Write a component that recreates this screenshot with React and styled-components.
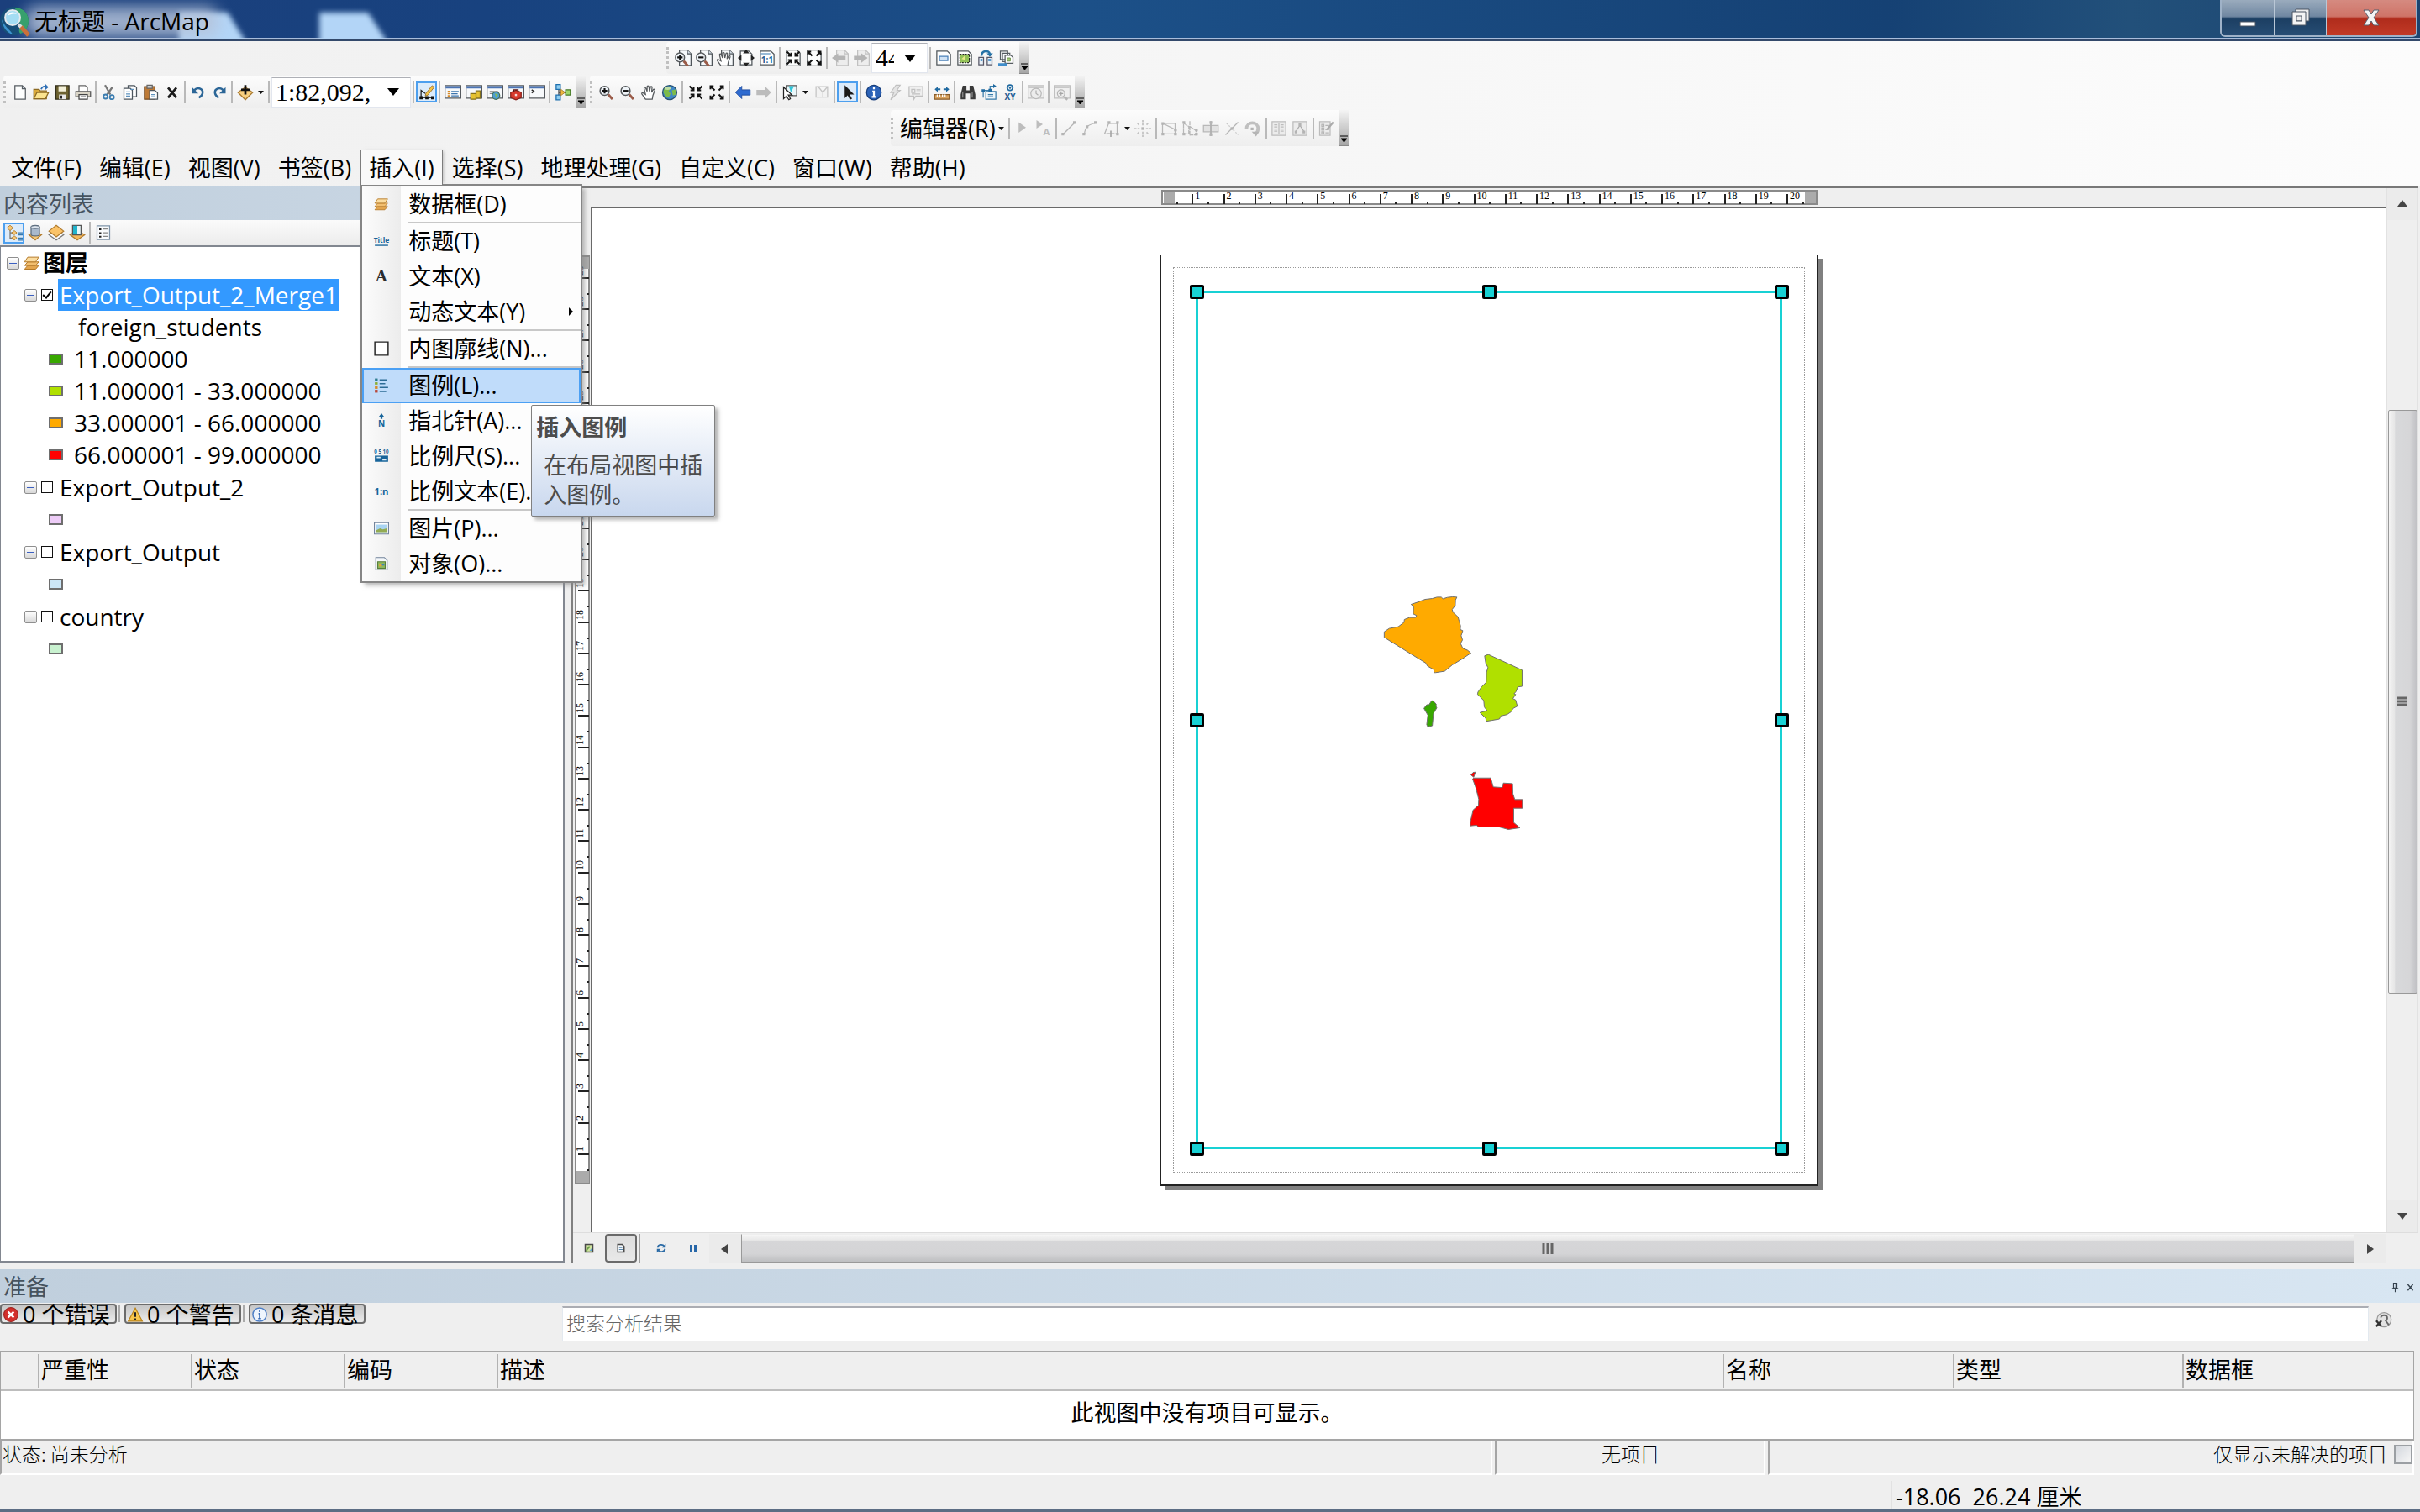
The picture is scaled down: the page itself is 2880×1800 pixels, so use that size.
import React, { useState } from "react";
import styled, { createGlobalStyle, css } from "styled-components";

const uiFont = `"Open Sans", "Noto Sans CJK SC", sans-serif`;

const GlobalStyle = createGlobalStyle`
  * {
    box-sizing: border-box;
  }
  body {
    margin: 0;
    background: #efefef;
    font-family: ${uiFont};
    font-size: 27px;
    line-height: 38px;
    color: #000;
  }
  button, input, select {
    font: inherit;
    color: inherit;
    margin: 0;
    padding: 0;
    border: 0;
    background: none;
  }
`;

/* ---------- window ---------- */

const Window = styled.div`
  display: flex;
  flex-direction: column;
  min-height: 100vh;
  overflow: hidden;
`;

const TitleBar = styled.header`
  position: relative;
  display: flex;
  align-items: flex-start;
  justify-content: space-between;
  height: 49px;
  padding-right: 3px;
  border-bottom: 3px solid #33496b;
  box-shadow: inset 0 -1px 0 #a9bddb;
  background: linear-gradient(90deg, #1b3f7c 0%, #18427f 20%, #1c5088 45%, #154174 78%, #22507a 88%, #1b4470 100%);
`;

const TitleShade = styled.svg`
  position: absolute;
  left: 0;
  top: 0;
  width: 520px;
  height: 46px;
`;

const WindowTitle = styled.h1`
  position: relative;
  display: flex;
  align-items: center;
  gap: 5px;
  height: 49px;
  margin: 0;
  font-size: 28px;
  font-weight: 400;
`;

const WindowButtons = styled.div`
  display: flex;
  height: 44px;
  border: 2px solid #9fb2c8;
  border-top: 0;
  border-radius: 0 0 6px 6px;
  overflow: hidden;
`;

const WindowButton = styled.button`
  display: flex;
  align-items: center;
  justify-content: center;
  width: ${(p) => (p.$close ? 107 : 62)}px;
  border-left: ${(p) => (p.$first ? 0 : 1)}px solid #b9c7d6;
  background: ${(p) =>
    p.$close
      ? "linear-gradient(#d58a80 0%, #cf7468 46%, #b02c1c 54%, #c23a26 100%)"
      : "linear-gradient(#9aabbd 0%, #7188a2 46%, #1c3f63 54%, #274d74 100%)"};
`;

/* ---------- toolbars ---------- */

const ToolbarArea = styled.div`
  display: flex;
  flex-direction: column;
  gap: 2px;
  padding-top: 1px;
  background: linear-gradient(90deg, #f0f0f0, #fcfcfc);
`;

const ToolbarRow = styled.div`
  display: flex;
  gap: 5px;
  height: ${(p) => p.$height}px;
  padding-left: ${(p) => p.$start}px;
`;

const Toolbar = styled.div`
  display: flex;
  align-items: center;
  border-radius: 4px;
  background: linear-gradient(#fcfcfc, #eeeeee);
`;

const Grip = styled.span`
  width: 7px;
  height: 26px;
  border-left: 3px dotted #c0c0c0;
`;

const ToolButton = styled.button`
  display: flex;
  align-items: center;
  justify-content: center;
  flex: none;
  width: 25px;
  height: 25px;
  ${(p) =>
    p.$on &&
    css`
      border: 2px solid #4d9fee;
      background: #dcebfa;
    `}
`;

const DropButton = styled.button`
  display: flex;
  align-items: center;
  justify-content: center;
  width: 13px;
  height: 25px;
`;

const Separator = styled.span`
  width: 2px;
  height: 26px;
  margin: 0 2px;
  background: #b9b9b9;
`;

const Overflow = styled.button`
  display: flex;
  align-items: flex-end;
  justify-content: center;
  align-self: stretch;
  width: 12px;
  margin-left: 3px;
  padding-bottom: 2px;
  border-bottom: 1px solid #8a8a8a;
  background: linear-gradient(#f4f4f4, #a6a6a6);
`;

const Combo = styled.label`
  display: flex;
  align-items: center;
  width: ${(p) => p.$width}px;
  height: 36px;
  padding: 0 4px;
  border: 1px solid #e2e6ee;
  border-top-color: #aeb0b6;
  background: #fff;
`;

const ComboSelect = styled.select`
  flex: 1;
  min-width: 0;
  appearance: none;
  overflow: hidden;
  text-overflow: clip;
  font-family: "Liberation Serif", serif;
  font-size: 30px;
  line-height: 32px;
`;

const ComboArrow = styled.svg`
  flex: none;
  width: 14px;
  height: 9px;
  margin: 0 9px 0 ${(p) => p.$gap}px;
`;

const EditorButton = styled.button`
  padding-left: 4px;
  white-space: nowrap;
`;

/* ---------- menu ---------- */

const MenuBar = styled.nav`
  display: flex;
  align-items: flex-start;
  gap: 1px;
  height: 46px;
  padding: 2px 0 0 3px;
`;

const MenuSlot = styled.div`
  position: relative;
`;

const MenuTitle = styled.button`
  position: relative;
  height: 42px;
  padding: 0 9px;
  line-height: 42px;
  white-space: nowrap;
  border: 1px solid transparent;
  border-bottom: 0;
  ${(p) =>
    p.$open &&
    css`
      z-index: 3;
      border-color: #7d7d7d;
      background: #f9f9f9;
      box-shadow: 3px 0 4px -2px #8888;
    `}
`;

const Dropdown = styled.div`
  position: absolute;
  z-index: 2;
  left: 0;
  top: 41px;
  width: 264px;
  padding-top: 1px;
  border: 2px solid #868686;
  box-shadow: 4px 4px 5px -1px #8889;
  background: linear-gradient(90deg, #fcfcfc 0, #ececec 46px, #fdfdfd 46px);
`;

const MenuEntry = styled.button`
  display: flex;
  align-items: center;
  width: 100%;
  height: 42px;
  padding-left: 14px;
  text-align: left;
  white-space: nowrap;
  ${(p) =>
    p.$active &&
    css`
      outline: 2px solid #4ba0f4;
      outline-offset: -2px;
      background: #c0dcfa;
    `}
`;

const EntryIcon = styled.span`
  display: flex;
  width: 41px;
`;

const EntryLabel = styled.span`
  flex: 1;
`;

const MenuRule = styled.hr`
  height: 2px;
  margin: 0 0 0 55px;
  border: 0;
  background: #c8c8c8;
`;

const Tooltip = styled.div`
  position: absolute;
  z-index: 4;
  left: 203px;
  top: 304px;
  width: 219px;
  padding: 8px 4px 8px 5px;
  border: 1px solid #808080;
  border-radius: 2px;
  box-shadow: 4px 4px 4px #7778;
  background: linear-gradient(#ffffff, #e4ebf6 50%, #c8d7ee);
  color: #4c4c4c;
  line-height: 35px;
`;

const TooltipTitle = styled.strong`
  display: block;
`;

const TooltipText = styled.p`
  margin: 10px 0 0 9px;
`;

/* ---------- workspace ---------- */

const Workspace = styled.main`
  display: flex;
  flex: 1;
  padding-right: 2px;
`;

const ContentsPane = styled.aside`
  display: flex;
  flex-direction: column;
  width: 672px;
  margin: 0 8px 1px 0;
`;

const PaneHeader = styled.div`
  display: flex;
  align-items: center;
  height: 40px;
  padding: 2px 4px 0;
  color: #46535f;
  background: linear-gradient(90deg, #c0cfdd, ${(p) => p.$end});
`;

const PaneTitle = styled.h2`
  flex: 1;
  margin: 0;
  font-size: 27px;
  font-weight: 400;
`;

const PaneTools = styled.div`
  display: flex;
  align-items: center;
  height: 30px;
  padding-left: 4px;
  background: linear-gradient(#fbfbfb, #ececec);
`;

const Tree = styled.div`
  flex: 1;
  border: 2px solid #828790;
  border-left-width: 1px;
  background: #fff;
`;

const LayerGroup = styled.div`
  margin-bottom: 1px;
  font-size: 28px;
`;

const TreeRow = styled.div`
  display: flex;
  align-items: center;
  height: 38px;
  padding-left: ${(p) => p.$indent}px;
`;

const Expander = styled.button`
  display: flex;
  align-items: center;
  justify-content: center;
  width: 15px;
  height: 15px;
  margin-right: 5px;
  border: 1px solid #8f8f8f;
  border-radius: 2px;
  background: linear-gradient(#fff, #d8d8d8);

  &::before {
    content: "";
    width: 9px;
    height: 1px;
    background: #3b5fc0;
  }
`;

const RootLabel = styled.strong`
  margin-left: 3px;
`;

const LayerCheck = styled.input`
  display: flex;
  align-items: center;
  justify-content: center;
  appearance: none;
  flex: none;
  width: 14px;
  height: 14px;
  margin-right: 6px;
  border: 1px solid #111;
  background: #fff;

  &:checked::before {
    content: "";
    width: 4px;
    height: 8px;
    margin-bottom: 2px;
    border: solid #000;
    border-width: 0 2px 2px 0;
    transform: rotate(40deg);
  }
`;

const LayerName = styled.label`
  padding: 0 2px;
  ${(p) =>
    p.$selected &&
    css`
      color: #fff;
      background: #3399ff;
    `}
`;

const Swatch = styled.span`
  width: 17px;
  height: 13px;
  margin-right: 13px;
  border: 2px solid #6e6e6e;
  background: ${(p) => p.$color};
`;

const MapView = styled.section`
  display: grid;
  flex: 1;
  grid-template-columns: 21px 1fr 38px;
  grid-template-rows: 22px 1fr 37px;
  border-top: 2px solid #787878;
  border-left: 2px solid #808080;
  background: #efefef;
`;

const RulerTop = styled.div`
  display: flex;
  grid-column: 2;
  align-items: center;
  justify-content: center;
  padding-left: 2px;
`;

const RulerSide = styled.div`
  display: flex;
  grid-column: 1;
  grid-row: 2;
  align-items: center;
  justify-content: center;
`;

const RulerText = styled.text`
  font-family: "Liberation Serif", serif;
  font-size: 12px;
`;

const Canvas = styled.div`
  display: flex;
  grid-column: 2;
  grid-row: 2;
  align-items: center;
  justify-content: center;
  border: solid #696969;
  border-width: 2px 0 0 2px;
  background: #fff;
`;

const Page = styled.div`
  width: 783px;
  height: 1109px;
  padding: 14px;
  border: 2px solid #222;
  border-width: 1px 2px 2px 1px;
  box-shadow: 5px 5px 0 #808080;
  background: #fff;
`;

const Margins = styled.div`
  height: 100%;
  padding: 28px 27px;
  border: 1px dotted #9a9a9a;
`;

const DataFrame = styled.div`
  position: relative;
  height: 100%;
  outline: 3px solid #18d1d4;
  outline-offset: -2px;
`;

const Countries = styled.svg`
  display: block;
  width: 100%;
  height: 100%;
`;

const Handle = styled.i`
  position: absolute;
  left: ${(p) => p.$x}%;
  top: ${(p) => p.$y}%;
  width: 17px;
  height: 17px;
  margin: -8px;
  border: 3px solid #000;
  border-radius: 2px;
  background: #18d1d4;
`;

const ScrollV = styled.div`
  display: flex;
  flex-direction: column;
  grid-column: 3;
  grid-row: 1 / 3;
  border: solid #e2e2e2;
  border-width: 0 1px;
`;

const ThumbV = styled.div`
  display: flex;
  align-items: center;
  justify-content: center;
  flex: 693;
  margin-left: 1px;
  border: 1px solid #999;
  border-radius: 2px;
  background: linear-gradient(90deg, #f4f4f4, #e6e6e6 20%, #d8d9db 24%, #d6d6d8 75%, #c0c0c4);
`;

const TrackV = styled.div`
  flex: ${(p) => p.$share};
`;

const ViewBar = styled.div`
  display: flex;
  grid-column: 1 / 4;
  grid-row: 3;
  padding: 1px 38px 1px 0;
  border-top: 1px solid #ddd;
`;

const ViewButton = styled.button`
  display: flex;
  align-items: center;
  justify-content: center;
  width: 38px;
  ${(p) =>
    p.$on &&
    css`
      border: 2px solid #6a6a6a;
      border-radius: 4px;
      background: linear-gradient(#ddd, #e8e8e8);
    `}
`;

const ViewDivider = styled.span`
  width: 2px;
  margin: 0 6px 0 2px;
  background: #a0a0a0;
`;

const ScrollButton = styled.button`
  display: flex;
  align-items: center;
  justify-content: center;
  flex: none;
  width: ${(p) => p.$width || 38}px;
  height: ${(p) => p.$height || 35}px;
  background: #ebebeb;
`;

const ThumbH = styled.div`
  display: flex;
  align-items: center;
  justify-content: center;
  flex: 1;
  border: 1px solid #999;
  border-top-color: #eee;
  background: linear-gradient(#f6f6f6, #e8e8e8 20%, #d6d6d8 22%, #d4d4d6 70%, #bebfc1);
`;

const Pause = styled.span`
  width: 8px;
  height: 8px;
  border: solid #2767a8;
  border-width: 0 3px;
`;

/* ---------- results pane ---------- */

const ResultsPane = styled.section`
  margin-top: 7px;
`;

const PaneButton = styled.button`
  display: flex;
  align-items: center;
  justify-content: center;
  width: 16px;
  height: 18px;
  margin-left: 2px;
`;

const FilterBar = styled.div`
  display: flex;
  justify-content: space-between;
  height: 57px;
  padding-top: 1px;
`;

const CountButtons = styled.div`
  display: flex;
  align-items: flex-start;
  flex: none;
  width: 669px;
`;

const CountButton = styled.button`
  display: flex;
  align-items: center;
  gap: 5px;
  width: 139px;
  height: 24px;
  padding: 2px 0 0 2px;
  line-height: 22px;
  white-space: nowrap;
  border: 2px solid #6c6c6c;
  border-radius: 4px;
  background: linear-gradient(#c6c6c6, #ebebeb);
`;

const CountGap = styled.span`
  width: 2px;
  height: 20px;
  margin: 2px 5px 0 2px;
  background: #aaa;
`;

const Search = styled.input`
  flex: 1;
  height: 42px;
  margin-top: 3px;
  padding: 0 4px 6px;
  border: 1px solid #e3e9ef;
  border-top: 2px solid #abadb3;
  background: #fff;
  font-family: "Noto Sans CJK SC", sans-serif;
  font-size: 23px;
  font-weight: 300;

  &::placeholder {
    color: #666;
    opacity: 1;
  }
`;

const SearchButton = styled.button`
  width: 61px;
  height: 32px;
  padding-left: 7px;
  text-align: left;
`;

const ResultsTable = styled.table`
  width: calc(100% - 7px);
  table-layout: fixed;
  border-collapse: separate;
  border-spacing: 0;
  border: solid #a5a5a5;
  border-width: 2px 1px;
`;

const ColumnHead = styled.th`
  width: ${(p) => (p.$width ? `${p.$width}px` : "auto")};
  height: 46px;
  padding: 0;
  text-align: left;
  font-weight: 400;
  border-bottom: 3px solid #bdbdbd;
`;

const ColumnLabel = styled.div`
  height: 40px;
  padding-left: ${(p) => (p.$first ? 0 : 2)}px;
  border-left: ${(p) => (p.$first ? 0 : 2)}px solid #b2b2b2;
`;

const EmptyCell = styled.td`
  height: 57px;
  padding: 0 0 6px;
  text-align: center;
  background: #fff;
`;

const ResultsFooter = styled.div`
  display: flex;
  width: calc(100% - 7px);
  height: 41px;
  gap: 3px;
  font-family: "Noto Sans CJK SC", sans-serif;
  font-size: 23px;
  line-height: 31px;
  font-weight: 300;
`;

const FooterCell = styled.div`
  display: flex;
  justify-content: ${(p) => p.$align || "flex-start"};
  flex: ${(p) => (p.$width ? "none" : 1)};
  width: ${(p) => (p.$width ? `${p.$width}px` : "auto")};
  padding-left: 1px;
  border-left: 2px solid #a5a5a5;
  border-right: 2px solid #fff;
  border-bottom: 2px solid #fff;
`;

const OnlyOpen = styled.label`
  display: flex;
  gap: 8px;
`;

const OnlyOpenCheck = styled.input`
  appearance: none;
  width: 22px;
  height: 23px;
  margin-top: 5px;
  border: 2px solid #9b9fa3;
  background: linear-gradient(135deg, #d4d8de, #f6f6f6);
`;

const StatusBar = styled.footer`
  display: flex;
  justify-content: flex-end;
  height: 44px;
  padding-top: 7px;
  border-bottom: 3px solid #5c6d84;
`;

const Coordinates = styled.output`
  width: 630px;
  padding-left: 4px;
  border-left: 2px solid #e2e2e2;
  white-space: pre;
`;

/* ---------- icons ---------- */

const page = (
  <>
    <path d="M3 1.500h7l3 3v10H3z" fill="#fdfefe" stroke="#565c61" />
    <path d="M10 1.500v3h3" fill="#d5dfe8" stroke="#565c61" />
  </>
);
const backPage = (
  <>
    <path d="M4.500 .500h7.500l3.500 3.500v11h-11z" fill="#f6f9fb" stroke="#4f555a" />
    <path d="M12 .500v3.500h3.500" fill="#d5dfe8" stroke="#4f555a" />
  </>
);
const grayPage = (
  <>
    <path d="M4.500 .500h7.500l3.500 3.500v11h-11z" fill="#ededed" stroke="#c1c1c1" />
    <path d="M12 .500v3.500h3.500" fill="none" stroke="#c1c1c1" />
  </>
);
const lens = (sign) => (
  <>
    <circle cx="6" cy="6.500" r="4.300" fill="#eef3f7" stroke="#55595c" strokeWidth="1.200" />
    <path d="M9.500 10l4 4.500" stroke="#9a5b48" strokeWidth="2.400" />
    <path d={sign} stroke="#111" strokeWidth="1.700" />
  </>
);
const hand = (
  <path
    d="M5 14.500L1.500 9.500c-.5-1 .7-1.500 1.500-.7L5 10 3.600 4c0-1.200 1.300-1.200 1.600-.2L6.500 7V2.500c0-1.200 1.500-1.200 1.700 0L8.700 7l1-4c.3-1 1.600-.8 1.500.3L10.800 8l1.500-2.600c.7-.8 1.700-.2 1.400.8L12 11l-.6 3.500z"
    fill="#fff"
    stroke="#55595c"
  />
);
const stack = (
  <g stroke="#b57a29" strokeWidth=".8">
    <path d="M1 14l3-3.500h10.500l-3 3.500z" fill="#e3a54e" />
    <path d="M1 10.500L4 7h10.500l-3 3.500z" fill="#f2bf70" />
    <path d="M1 7L4 2.500h10.500L11.500 7z" fill="#fbdc9f" />
  </g>
);
const inward = <path d="M2 2l4 4M6 3v3H3M14 2l-4 4M10 3v3h3M2 14l4-4M6 13v-3H3M14 14l-4-4M10 13v-3h3" stroke="#111" strokeWidth="1.600" fill="none" />;
const outward = <path d="M6 6L2 2M2 5V2h3M10 6l4-4M14 5V2h-3M6 10l-4 4M2 11v3h3M10 10l4 4M14 11v3h-3" stroke="#111" strokeWidth="1.600" fill="none" />;
const frame = (
  <>
    <path d="M.500 1.500h15v12H.500z" fill="#f7f9fb" stroke="#55595e" />
    <path d="M1 2h14v2.200H1z" fill="#4b74b5" />
  </>
);
const grayFrame = (
  <>
    <path d="M.500 1.500h15v12H.500z" fill="#efefef" stroke="#c0c0c0" />
    <path d="M1 2h14v2H1z" fill="#c8c8c8" />
  </>
);
const dot = (x, y) => <path key={`${x}-${y}`} d={`M${x} ${y}h2.600v2.600h-2.600z`} fill="#b4b4b4" />;

const icons = {
  file: page,
  open: (
    <>
      <path d="M1 5h5l1 1.500h6V14H1z" fill="#d9a93b" stroke="#8d6a22" />
      <path d="M1 14l3-6h11l-3 6z" fill="#fbe38e" stroke="#8d6a22" />
      <path d="M8 5c1-3 3-3 5-2" stroke="#2f6fb5" strokeWidth="1.500" fill="none" />
      <path d="M12 0l3 3-3 2.500z" fill="#2f6fb5" />
    </>
  ),
  save: (
    <>
      <path d="M2 1.500h12.500v13H2z" fill="#6d6231" stroke="#332f1c" />
      <path d="M4.500 2h7v5h-7z" fill="#f3f0d8" />
      <path d="M5 10h6.500v4.500H5z" fill="#e8e8e8" />
      <path d="M6 11h2v3H6z" fill="#222" />
    </>
  ),
  print: (
    <>
      <path d="M4 7V1.500h6l2 2V7" fill="#fff" stroke="#666" />
      <path d="M1 7h14v5H1z" fill="#d9d4c6" stroke="#555" />
      <path d="M4 10h8v4.500H4z" fill="#fff" stroke="#444" />
      <path d="M5.500 12h5" stroke="#777" />
    </>
  ),
  cut: (
    <>
      <path d="M4 1l5 9M11 3l-5 7" stroke="#777" strokeWidth="1.800" />
      <circle cx="4.500" cy="12" r="2" fill="none" stroke="#3c7db0" strokeWidth="1.500" />
      <circle cx="10.500" cy="12.500" r="2" fill="none" stroke="#3c7db0" strokeWidth="1.500" />
    </>
  ),
  copy: (
    <>
      <path d="M6 1.500h6l2 2V12H6z" fill="#fff" stroke="#4c555d" />
      <path d="M2 4h6l2 2v8.500H2z" fill="#fff" stroke="#4c555d" />
      <path d="M4 7.500h4M4 9.500h4M4 11.500h4M8 5h4" stroke="#5d91bd" />
    </>
  ),
  paste: (
    <>
      <path d="M1.500 2.500h10v12h-10z" fill="#bd7a37" stroke="#744a20" />
      <path d="M4 1h5v3H4z" fill="#ccc" stroke="#666" />
      <path d="M6.500 6h5l2.500 2.500v6H6.500z" fill="#fff" stroke="#4c555d" />
      <path d="M8 10h4M8 12h4" stroke="#5d91bd" />
    </>
  ),
  remove: <path d="M4 3.500l8 9.500M12 3.500L4 13" stroke="#1c1c1c" strokeWidth="2.200" />,
  undo: (
    <>
      <path d="M4 6c4-4 9-1 8 3-.4 2-1.500 3-3.500 4" stroke="#2c6697" strokeWidth="2" fill="none" />
      <path d="M2 3v6h6z" fill="#2c6697" />
    </>
  ),
  redo: (
    <>
      <path d="M12 6C8 2 3 5 4 9c.4 2 1.500 3 3.500 4" stroke="#2c6697" strokeWidth="2" fill="none" />
      <path d="M14 3v6H8z" fill="#2c6697" />
    </>
  ),
  addData: (
    <>
      <path d="M1 8l7-5 7 5-7 7z" fill="#f8cf7f" stroke="#a97a31" />
      <path d="M8 1v9M4 5.500h8" stroke="#111" strokeWidth="2.200" />
    </>
  ),
  edit: (
    <>
      <path d="M2.500 13V6l4 3" stroke="#222" fill="none" />
      <path d="M3 13h11" stroke="#222" />
      <path d="M1 11.500h3v3H1zM6.500 11.500h3v3h-3zM12 11.500h3v3h-3z" fill="#111" />
      <path d="M7 9l6-7.500 2 1.500-6 7.500-2.500 1z" fill="#f2c144" stroke="#94692c" strokeWidth=".7" />
    </>
  ),
  contents: (
    <>
      {frame}
      <path d="M3 7h2M3 9.200h2M3 11.300h2" stroke="#d98a26" strokeWidth="1.300" />
      <path d="M6.500 7h7M6.500 9.200h6M6.500 11.300h7" stroke="#3c75ae" />
    </>
  ),
  catalog: (
    <>
      {frame}
      <path d="M5 9h5v5.500H5zM10 6.500h4v7h-4z" fill="#e5c232" stroke="#85701a" />
    </>
  ),
  search: (
    <>
      {frame}
      <path d="M3 7h8M3 9h3" stroke="#888" />
      <circle cx="9" cy="11" r="3.600" fill="#4f9ed1" stroke="#3c6d55" />
      <path d="M8 9l3 1-2 2.500z" fill="#86bc55" />
    </>
  ),
  toolbox: (
    <>
      {frame}
      <path d="M3 8l5-2 5 2v5l-5 2-5-2z" fill="#d8392c" stroke="#86211b" />
      <path d="M6 7.500V5.500h4v2" fill="none" stroke="#5a1512" />
      <path d="M7 9.500h2v2H7z" fill="#f3d7d3" />
    </>
  ),
  python: (
    <>
      {frame}
      <path d="M3 5.500l2 1.500-2 1.500" fill="none" stroke="#222" strokeWidth="1.200" />
    </>
  ),
  model: (
    <>
      <path d="M4 4v8M4 8h7" stroke="#444" />
      <path d="M1.500 .500h4v4.500h-4zM1.500 10.500h4v4.500h-4z" fill="#8ecdf0" stroke="#1d6fae" />
      <path d="M6 5l4 3-4 3z" fill="#f0b83d" stroke="#987021" strokeWidth=".6" />
      <path d="M10.500 5.500h4.500v5h-4.500z" fill="#9fd76c" stroke="#477a28" />
    </>
  ),
  zoomIn: lens("M3.500 6.500h5M6 4v5"),
  zoomOut: lens("M3.500 6.500h5"),
  pan: hand,
  globe: (
    <>
      <circle cx="8" cy="8" r="6.800" fill="#3f87c7" stroke="#28506f" />
      <path d="M3 4c3-3 6-2 6 0L7 7l2 2-2 4C4 12 2 9 2 7zM10 6l4-1v5l-3 1z" fill="#7dbb49" />
      <ellipse cx="6" cy="4" rx="3" ry="1.500" fill="#fff" opacity=".5" />
    </>
  ),
  inward,
  outward,
  back: <path d="M1 8l6-6v3.500h8v5H7V14z" fill="#2f6bd0" stroke="#1f4a9c" strokeWidth=".7" />,
  forward: <path d="M15 8L9 2v3.500H1v5h8V14z" fill="#bcbcbc" />,
  selectFeature: (
    <>
      <path d="M5 1.500h9.500v9.500H5z" fill="#e9f7fa" stroke="#555" />
      <path d="M7 2h5L9 8z" fill="#2fc5da" />
      <path d="M2 3v11l2.700-2.500L7 15l1.500-1-2-3.500H10z" fill="#fff" stroke="#222" />
    </>
  ),
  clearSelect: <path d="M2.500 2.500h11v10h-11zM5 3l4 5 4-5M9 8v4" fill="#f2f2f2" stroke="#c4c4c4" />,
  pointer: <path d="M5 1v12.500l2.800-2.700L10 15l2-1-2.200-4H14z" fill="#1a1a1a" />,
  identify: (
    <>
      <circle cx="8" cy="8" r="7" fill="#2c63b8" stroke="#173e7c" />
      <path d="M8 3v2M6.500 7H8v5M6 12.200h4" stroke="#fff" strokeWidth="1.800" fill="none" />
    </>
  ),
  bolt: <path d="M9 1h4l-3 5h3L4 15l3-7H4z" fill="#e4e4e4" stroke="#c0c0c0" />,
  popup: (
    <>
      <path d="M1.500 2.500h13v9H8l-2 3v-3H1.500z" fill="#efefef" stroke="#c0c0c0" />
      <path d="M4 5h3v3H4zM8.500 5.500h4M8.500 7.500h4M4 9.500h8" stroke="#c0c0c0" fill="none" />
    </>
  ),
  measure: (
    <>
      <path d="M1 10h14v4.500H1z" fill="#d8a360" stroke="#8a5c27" />
      <path d="M3.500 10v2M6 10v2M8.500 10v2M11 10v2" stroke="#fff" />
      <path d="M1 5l3-2.500v5zM15 5l-3-2.500v5z" fill="#1f69a0" />
      <path d="M3 5h3.500M9.500 5H13" stroke="#1f69a0" strokeWidth="1.500" />
    </>
  ),
  find: (
    <>
      <path d="M3 1.500h3.500V6h3V1.500H13L15 10v4.500h-5V9H6v5.500H1V10z" fill="#3a3a3a" />
      <path d="M3 8v5M12 8v5" stroke="#909090" />
    </>
  ),
  route: (
    <>
      <path d="M5 7h9.500v7.500H5z" fill="#edf5fa" stroke="#377ba9" />
      <path d="M2.500 13V6H9V2h4M7 10h5M7 12h5" stroke="#377ba9" fill="none" />
      <path d="M1 5h3v3H1zM7.500 4.500h3v3h-3zM12 0l3 2-3 2z" fill="#1f69a0" />
    </>
  ),
  goToXY: (
    <>
      <circle cx="8" cy="3.500" r="2.600" fill="none" stroke="#1f69a0" strokeWidth="1.500" />
      <circle cx="8" cy="3.500" r="1" fill="#1f69a0" />
      <text x="8" y="15" textAnchor="middle" fontSize="8" fontWeight="700" fill="#1f5f95">XY</text>
    </>
  ),
  time: (
    <>
      {grayFrame}
      <circle cx="8" cy="9" r="5" fill="#ececec" stroke="#b9b9b9" />
      <path d="M8 6v3l2 1.500" stroke="#b0b0b0" fill="none" />
    </>
  ),
  viewer: (
    <>
      {grayFrame}
      <circle cx="7" cy="9" r="3.500" fill="#eee" stroke="#b5b5b5" />
      <path d="M10 12l3 3" stroke="#b5b5b5" strokeWidth="2" />
      <path d="M5 9h4M7 7v4" stroke="#a5a5a5" />
    </>
  ),
  pageZoomIn: <>{backPage}<g transform="translate(-1 1)">{lens("M3.500 6.500h5M6 4v5")}</g></>,
  pageZoomOut: <>{backPage}<g transform="translate(-1 1)">{lens("M3.500 6.500h5")}</g></>,
  pagePan: <>{backPage}<g transform="translate(-1 1)">{hand}</g></>,
  pageWhole: (
    <>
      <path d="M2.500 1.500h8l3 3v10h-11z" fill="#fdfefe" stroke="#4f555a" />
      <path d="M8 0l3 3.500H5zM8 16l3-3.500H5zM0 8l3.500-3v6zM16 8l-3.500-3v6z" fill="#222" />
    </>
  ),
  pageFull: (
    <>
      <path d="M1.500 1.500h10l3 3v10h-13z" fill="#fdfefe" stroke="#4f555a" />
      <path d="M2 4h9" stroke="#5d91bd" />
      <text x="8" y="12.500" textAnchor="middle" fontSize="8" fontWeight="700" fill="#1f5f95">1:1</text>
    </>
  ),
  pageIn: <><path d="M1.500 .500h10l3 3v12h-13z" fill="#fdfefe" stroke="#4f555a" />{inward}</>,
  pageOut: <><path d="M1.500 .500h10l3 3v12h-13z" fill="#fdfefe" stroke="#4f555a" />{outward}</>,
  pageBack: <>{grayPage}<path d="M0 8l6-4.500v2.500h7v4H6v2.500z" fill="#b5b5b5" /></>,
  pageForward: <>{grayPage}<path d="M14 8L8 3.500V6H1v4h7v2.500z" fill="#b5b5b5" /></>,
  draft: (
    <>
      <path d="M1.500 1.500h10l3 3v10h-13z" fill="#fdfefe" stroke="#4f555a" />
      <path d="M4 6.500h8v4H4z" fill="#cfe2f5" stroke="#4a80b8" />
    </>
  ),
  focus: (
    <>
      <path d="M1.500 1.500h10l3 3v10h-13z" fill="#fdfefe" stroke="#4f555a" />
      <path d="M3.500 4.500h9v8h-9z" fill="#93c257" stroke="#222" strokeDasharray="1.500 1" />
      <path d="M5 9l3-3 1 4z" fill="#e8eb8b" />
    </>
  ),
  layoutChange: (
    <>
      <path d="M1.500 7.500H6v7H1.500zM9.500 7.500H14v7H9.500z" fill="#e9f0f6" stroke="#556" />
      <path d="M10.500 10h2.500M3 10h2" stroke="#2f82c4" strokeWidth="2" />
      <path d="M4 6c0-5 7-6 8-2" stroke="#2672a6" strokeWidth="2" fill="none" />
      <path d="M9 3.500h6L12 7z" fill="#2672a6" />
    </>
  ),
  drivenPages: (
    <>
      <path d="M2 1.500h7v8H2zM4 3.500h7v8H4z" fill="#f5f7f9" stroke="#565c61" />
      <path d="M6.500 5.500H12l2 2V13H6.500z" fill="#fff" stroke="#565c61" />
      <path d="M8.500 8h3v3h-3z" fill="#a6cf7c" stroke="#63883f" strokeWidth=".7" />
      <path d="M0 13h8v2.500H0z" fill="#3f8dca" />
    </>
  ),
  editTool: <path d="M5 2v10l7-5z" fill="#bdbdbd" />,
  editNote: (
    <>
      <path d="M2 0v8l6-4z" fill="#bdbdbd" />
      <text x="11.500" y="14.500" textAnchor="middle" fontSize="9" fontWeight="700" fill="#bdbdbd">A</text>
    </>
  ),
  line: <><path d="M3 13L13 3" stroke="#b4b4b4" />{dot(1, 12)}{dot(12, 1)}</>,
  arc: <><path d="M3 13c0-6 4-9 10-10" stroke="#b4b4b4" fill="none" />{dot(1, 12)}{dot(4, 5)}{dot(12, 1)}</>,
  trace: (
    <>
      <path d="M2 13L6 3h8v10M2 13h4M10 13h4" stroke="#b4b4b4" fill="none" />
      {dot(5, 1)}{dot(13, 1)}{dot(13, 12)}
      <path d="M8 10v6M5 13h6" stroke="#a5a5a5" strokeWidth="1.300" />
    </>
  ),
  point: (
    <>
      <path d="M8 0v5M8 11v5M0 8h5M11 8h5M3 3l2 2M13 3l-2 2M3 13l2-2M13 13l-2-2" stroke="#c2c2c2" strokeWidth="1.400" strokeDasharray="2 1" />
      {dot(6.7, 6.7)}
    </>
  ),
  vertices: <><path d="M2 3v10h12V9zM2 3h12v6" stroke="#b8b8b8" fill="none" />{dot(1, 2)}{dot(13, 8)}{dot(1, 12)}{dot(13, 12)}</>,
  reshape: <><path d="M2 3l5 3v7H2zM8 1v14M8 6l6 4v4H8" stroke="#b8b8b8" fill="none" strokeDasharray="4 .6" />{dot(1, 1)}{dot(1, 12)}{dot(13, 8)}{dot(13, 12)}</>,
  cutPoly: <><path d="M1 5h14v6H1z" fill="#e2e2e2" stroke="#b8b8b8" /><path d="M8 1v14" stroke="#b0b0b0" strokeWidth="1.500" />{dot(6.7, 1)}{dot(6.7, 12.5)}</>,
  split: <><path d="M2 14L14 2" stroke="#b4b4b4" /><path d="M3 3l11 11" stroke="#cacaca" strokeDasharray="1.500 1.500" />{dot(6.7, 6.7)}</>,
  rotate: <><path d="M2 8c0-7 11-7 11 0 0 2-1 4-3 5" stroke="#c0c0c0" strokeWidth="3" fill="none" /><path d="M7 11l7 0-3 4.500z" fill="#b5b5b5" />{dot(6, 7)}</>,
  attributes: <path d="M1.500 1.500h13v13h-13zM8 3v10M3.500 4.500h3M3.500 6.500h3M3.500 8.500h3M3.500 10.500h3M9.500 4.500h3M9.500 6.500h3M9.500 8.500h3M9.500 10.500h3" fill="#ececec" stroke="#bcbcbc" />,
  sketch: <><path d="M1.500 1.500h13v13h-13z" fill="#ececec" stroke="#bcbcbc" /><path d="M4 11l4-6 4 6" fill="none" stroke="#aaa" />{dot(6.7, 3)}{dot(3, 10)}{dot(10.5, 10)}</>,
  create: <><path d="M2 1.500h10v13H2z" fill="#ececec" stroke="#bcbcbc" /><path d="M4 4h2v2H4zM4 7.500h2v2H4zM4 11h2v2H4zM7.500 5H11M7.500 9H11M7.500 12H11" fill="none" stroke="#b5b5b5" /><path d="M9 9l6-7" stroke="#aaa" strokeWidth="1.800" /></>,
  byDrawing: (
    <>
      <path d="M4 5v8h3M4 8h3" stroke="#777" fill="none" />
      <path d="M1 3.500L4 1l3 2.500L4 6zM5.500 8L8 6l2.500 2L8 10zM5.500 13L8 11l2.500 2L8 15z" fill="#f6c878" stroke="#b17b2d" strokeWidth=".7" />
      <path d="M12 8h4M12 10h4M12 13h4M12 15h4" stroke="#3578ae" />
    </>
  ),
  bySource: (
    <>
      <path d="M2 10l6 5 6-5-6-3z" fill="#f6c878" stroke="#b17b2d" />
      <path d="M4 2.500c0-2 8-2 8 0v7c0 2-8 2-8 0z" fill="#a9b9cc" stroke="#5b6b7d" />
      <ellipse cx="8" cy="2.800" rx="4" ry="1.500" fill="#dde5ee" stroke="#5b6b7d" strokeWidth=".7" />
    </>
  ),
  byVisibility: (
    <>
      <path d="M1 10l7-5 7 5-7 5z" fill="#fafafa" stroke="#777" />
      <path d="M1 6.500L8 1l7 5.500L8 12z" fill="#fbc368" stroke="#b17b2d" />
    </>
  ),
  bySelection: (
    <>
      <path d="M1 10l7 5 7-5-7-4z" fill="#f6b95c" stroke="#b17b2d" />
      <path d="M3.500 1h8v9h-8z" fill="#e9f7fa" stroke="#555" />
      <path d="M4 1.500h4v8H4z" fill="#23b4cc" />
    </>
  ),
  options: (
    <>
      <path d="M2 1.500h12v13H2z" fill="#fafcfe" stroke="#7d93a8" />
      <path d="M4 4h2v1.500H4zM4 7.500h2V9H4zM4 11h2v1.500H4z" fill="#222" />
      <path d="M7.500 4.500H12M7.500 8H12M7.500 11.500H12" stroke="#888" />
    </>
  ),
  stack,
  title: (
    <>
      <text x="8" y="10" textAnchor="middle" fontSize="7.500" fontWeight="700" fill="#17649a">Title</text>
      <path d="M1 12.500h14" stroke="#17649a" strokeWidth="1.200" />
    </>
  ),
  text: <text x="8" y="13" textAnchor="middle" fontFamily="Liberation Serif" fontSize="17" fontWeight="700" fill="#2b2b2b">A</text>,
  neatline: <path d="M1 1h14v14H1z" fill="#fff" stroke="#222" strokeWidth="1.300" />,
  legend: (
    <>
      <path d="M1 .500h3v2.500H1z" fill="#2f7d8e" />
      <path d="M1 4.500h3v2.500H1z" fill="#8cae33" />
      <path d="M1 8.500h3v3H1z" fill="#d88a2b" />
      <path d="M1 12.500h3v3H1z" fill="#b9483a" />
      <path d="M6 2h8M6 6h6M6 10h9M6 14.200h7" stroke="#2d6c95" strokeWidth="1.300" />
    </>
  ),
  north: (
    <>
      <path d="M8 0l3 4H9v2H7V4H5z" fill="#17649a" />
      <text x="8" y="14.500" textAnchor="middle" fontSize="9" fontWeight="700" fill="#17649a">N</text>
    </>
  ),
  scaleBar: (
    <>
      <text x="8" y="5" textAnchor="middle" fontSize="5.500" fontWeight="700" fill="#17649a">0 5 10</text>
      <path d="M1 7.500h14V14H1z" fill="#17649a" />
      <path d="M3 9.500h4M9 12h4" stroke="#dcecf7" strokeWidth="1.500" />
    </>
  ),
  scaleText: <text x="8" y="11.500" textAnchor="middle" fontSize="10" fontWeight="700" fill="#17649a">1:n</text>,
  picture: (
    <>
      <path d="M.500 2h15v12H.500z" fill="#fff" stroke="#71839b" />
      <path d="M2.500 4h11v8h-11z" fill="#a9d4f2" />
      <path d="M2.500 12v-2l4-2 3 1 4-1v4z" fill="#93ab53" />
    </>
  ),
  object: (
    <>
      <path d="M2 1.500h9l3 3v10H2z" fill="#f4f7fa" stroke="#71839b" />
      <path d="M4 6h8v7H4z" fill="#8db85e" stroke="#5b7e3a" />
      <path d="M5.500 8.500h3V11h-3z" fill="#e9a13b" />
      <path d="M8.500 8h2.500v2H8.500z" fill="#3e80bd" />
    </>
  ),
  dataView: (
    <>
      <path d="M2 2h12v12H2z" fill="#cfe39f" stroke="#4a4a4a" strokeWidth="2" />
      <path d="M4 13c0-5 3-4 5-8" stroke="#679b45" strokeWidth="2.500" fill="none" />
      <path d="M9 12l3-4v4z" fill="#5ea6d6" />
    </>
  ),
  layoutView: (
    <>
      <path d="M3 2h7l3 3v9H3z" fill="#f2f6f9" stroke="#4a4a4a" strokeWidth="2" />
      <path d="M5 7h5M5 10h6" stroke="#5a87ad" strokeWidth="1.500" />
    </>
  ),
  refresh: (
    <>
      <path d="M2 7c1-5 8-6 11-2M14 9c-1 5-8 6-11 2" stroke="#2a6aa5" strokeWidth="2.300" fill="none" />
      <path d="M15 1v6H9zM1 15V9h6z" fill="#2a6aa5" />
    </>
  ),
  error: (
    <>
      <circle cx="8" cy="8" r="7.500" fill="#d3302c" stroke="#a02622" />
      <path d="M5 5l6 6M11 5l-6 6" stroke="#fff" strokeWidth="2.200" />
    </>
  ),
  warning: (
    <>
      <path d="M8 1l7.500 14H.500z" fill="#f8c64c" stroke="#b98218" />
      <path d="M8 5.500v5M8 12v1.800" stroke="#222" strokeWidth="1.800" />
    </>
  ),
  info: (
    <>
      <circle cx="8" cy="8" r="7.200" fill="#eef5fd" stroke="#4e7fc6" strokeWidth="1.300" />
      <path d="M8 3.500v1.800M6.800 7H8v5M6.500 12.200h3" stroke="#3468b4" strokeWidth="1.400" fill="none" />
    </>
  ),
  clearSearch: (
    <>
      <circle cx="9" cy="8" r="6.800" fill="#e3e3e3" stroke="#999" />
      <path d="M6 6c0-3 6-3 6 .5 0 2-1.500 2.500-1.500 2.500l3 4" stroke="#666" strokeWidth="1.500" fill="none" />
      <path d="M1.500 9l5 5.500M6.500 9l-5 5.500" stroke="#333" strokeWidth="1.800" />
    </>
  ),
  pin: <path d="M5.500 2h5v7h-5zM9 2v7M3.500 9.500h9M8 10v5" fill="none" stroke="#34414d" strokeWidth="1.400" />,
  close: <path d="M3.500 3l9 10.500M12.500 3l-9 10.500" stroke="#34414d" strokeWidth="2" />,
};

const IconSvg = styled.svg`
  flex: none;
  overflow: visible;
  font-family: "Open Sans", sans-serif;
  line-height: 1;
`;

const Icon = ({ name, size = 20 }) => (
  <IconSvg width={size} height={size} viewBox="0 0 16 16" fill="none" aria-hidden="true">
    {icons[name]}
  </IconSvg>
);

const Arrow = ({ dir }) => {
  const paths = {
    up: "M0 9l6-8 6 8z",
    down: "M0 2l6 8 6-8z",
    left: "M9 0L1 6l8 6z",
    right: "M2 0l8 6-8 6z",
  };
  return (
    <svg width="12" height="12" aria-hidden="true">
      <path d={paths[dir]} fill="#444" />
    </svg>
  );
};

const SmallDown = () => (
  <svg width="7" height="4" aria-hidden="true">
    <path d="M0 0h7L3.500 4z" fill="#111" />
  </svg>
);

const GripLines = ({ vertical }) => (
  <svg width="17" height="17" aria-hidden="true">
    <path d={vertical ? "M2 4h12M2 8h12M2 12h12" : "M3 2v13M8 2v13M13 2v13"} stroke="#666" strokeWidth="3" />
  </svg>
);

const Logo = () => (
  <svg width="36" height="40" viewBox="0 0 36 40" aria-hidden="true">
    <circle cx="17" cy="20" r="17" fill="#174f78" />
    <path d="M17 4c12 0 17 8 17 16s-5 14-10 15c-4-6 3-9-1-14s2-7-6-17z" fill="#37a06d" />
    <path d="M2 18c1 9 6 16 13 18-2-5-9-8-13-18z" fill="#3c94ce" />
    <circle cx="15" cy="16" r="9" fill="#a4ddf3" stroke="#e4eaee" strokeWidth="2" />
    <path d="M9 14c2-5 8-6 11-2-4-1-8 0-11 2z" fill="#fff" />
    <path d="M22 24l4 4" stroke="#dcdcdc" strokeWidth="4" />
    <path d="M25 27l9 10" stroke="#c9703a" strokeWidth="5" />
  </svg>
);

/* ---------- data ---------- */

const layoutTools = ["pageZoomIn", "pageZoomOut", "pagePan", "pageWhole", "pageFull", "|", "pageIn", "pageOut", "|", "pageBack", "pageForward"];
const layoutToolsEnd = ["|", "draft", "focus", "layoutChange", "drivenPages"];
const standardTools = ["file", "open", "save", "print", "|", "cut", "copy", "paste", "remove", "|", "undo", "redo", "|", "addData", "v", "|"];
const standardToolsEnd = ["|", "*edit", "|", "contents", "catalog", "search", "toolbox", "python", "|", "model"];
const mapTools = [
  "zoomIn", "zoomOut", "pan", "globe", "|", "inward", "outward", "|", "back", "forward", "|", "selectFeature", "v", "clearSelect", "|",
  "*pointer", "|", "identify", "bolt", "popup", "|", "measure", "|", "find", "route", "goToXY", "|", "time", "|", "viewer",
];
const editorTools = [
  "v", "|", "editTool", "editNote", "|", "line", "arc", "trace", "v", "point", "|", "vertices", "reshape", "cutPoly", "split", "rotate",
  "|", "attributes", "sketch", "|", "create",
];

const insertMenu = [
  { icon: "stack", label: "数据框(D)" },
  null,
  { icon: "title", label: "标题(T)" },
  { icon: "text", label: "文本(X)" },
  { label: "动态文本(Y)", sub: true },
  null,
  { icon: "neatline", label: "内图廓线(N)..." },
  null,
  { icon: "legend", label: "图例(L)...", active: true },
  { icon: "north", label: "指北针(A)..." },
  { icon: "scaleBar", label: "比例尺(S)..." },
  { icon: "scaleText", label: "比例文本(E)..." },
  null,
  { icon: "picture", label: "图片(P)..." },
  { icon: "object", label: "对象(O)..." },
];

const menus = ["文件(F)", "编辑(E)", "视图(V)", "书签(B)", "插入(I)", "选择(S)", "地理处理(G)", "自定义(C)", "窗口(W)", "帮助(H)"];

const layers = [
  {
    name: "Export_Output_2_Merge1",
    selected: true,
    field: "foreign_students",
    classes: [
      ["#38a800", "11.000000"],
      ["#b0e000", "11.000001 - 33.000000"],
      ["#ffaa00", "33.000001 - 66.000000"],
      ["#ff0000", "66.000001 - 99.000000"],
    ],
  },
  { name: "Export_Output_2", classes: [["#edccf7", ""]] },
  { name: "Export_Output", classes: [["#cbe6f7", ""]] },
  { name: "country", classes: [["#c9f2d0", ""]] },
];

const countries = [
  {
    color: "#ffaa00",
    d: "M182 88L206 80 232 70 258 67 275 62 290 62 296 68 312 63 330 61 346 62 341 72 340 92 329 106 332 116 350 133 354 148 359 165 358 178 367 182 361 200 366 215 359 228 367 245 384 252 396 262 362 285 330 304 302 327 270 332 264 332 264 322 240 308 235 298 160 252 86 206 86 186 104 174 136 168 157 152 158 142 176 135 198 135 202 128 190 122 191 96z",
  },
  {
    color: "#b0e000",
    d: "M445 272L458 267 579 323 579 381 564 383 557 400 550 408 556 410 546 425 556 430 562 452 547 460 540 472 525 482 503 487 498 498 470 503 451 506 449 495 428 475 454 468 444 455 442 432 430 420 420 410 421 402 434 383 451 366 452 330 457 314 449 298z",
  },
  { color: "#38a800", d: "M228 460L238 447 246 447 256 432 264 436 272 445 271 452 274 458 262 478 258 522 242 526 238 518 242 484z" },
  {
    color: "#ff0000",
    d: "M396 698L404 689 412 688 406 706zM402 712L406 709 467 709 476 741 508 743 512 727 545 729 546 765 553 786 580 786 580 817 549 817 549 868 571 887 530 893 497 884 424 884 416 878 394 880 394 866 404 823 423 807 424 785 414 745z",
  },
];

const handles = [
  [0, 0], [50, 0], [100, 0],
  [0, 50], [100, 50],
  [0, 100], [50, 100], [100, 100],
];

const columns = [
  ["", 44],
  ["严重性", 182],
  ["状态", 182],
  ["编码", 182],
  ["描述", 0],
  ["名称", 274],
  ["类型", 273],
  ["数据框", 275],
];

/* ---------- parts ---------- */

const Tools = ({ items }) =>
  items.map((item, i) => {
    if (item === "|") return <Separator key={i} />;
    if (item === "v") return <DropButton key={i} aria-label="more"><SmallDown /></DropButton>;
    const on = item[0] === "*";
    const name = on ? item.slice(1) : item;
    return (
      <ToolButton key={i} $on={on} aria-label={name}>
        <Icon name={name} />
      </ToolButton>
    );
  });

const ToolbarEnd = () => (
  <Overflow aria-label="toolbar options">
    <svg width="9" height="10" aria-hidden="true">
      <path d="M0 1h9M1 4l3.500 4L8 4z" fill="#000" stroke="#000" />
    </svg>
  </Overflow>
);

const ComboBox = ({ label, value, width, gap }) => (
  <Combo $width={width}>
    <ComboSelect aria-label={label} defaultValue={value}>
      <option>{value}</option>
    </ComboSelect>
    <ComboArrow $gap={gap} viewBox="0 0 14 9" aria-hidden="true">
      <path d="M0 0h14L7 9z" />
    </ComboArrow>
  </Combo>
);

const InsertMenu = () => (
  <>
    <Dropdown>
      {insertMenu.map((entry, i) =>
        entry ? (
          <MenuEntry key={i} $active={entry.active}>
            <EntryIcon>{entry.icon && <Icon name={entry.icon} size={18} />}</EntryIcon>
            <EntryLabel>{entry.label}</EntryLabel>
            {entry.sub && (
              <svg width="14" height="10" aria-hidden="true">
                <path d="M0 0l5 5-5 5z" fill="#000" />
              </svg>
            )}
          </MenuEntry>
        ) : (
          <MenuRule key={i} />
        )
      )}
    </Dropdown>
    <Tooltip role="tooltip">
      <TooltipTitle>插入图例</TooltipTitle>
      <TooltipText>在布局视图中插入图例。</TooltipText>
    </Tooltip>
  </>
);

const CM = 37.25;

const HorizontalRuler = () => (
  <svg width="781" height="18" aria-hidden="true">
    <path d="M1 1h779v16H1z" fill="#fff" stroke="#8a8a8a" strokeWidth="2" />
    <path d="M3 2h13v14H3zM766 2h13v14h-13z" fill="#ababab" />
    {Array.from({ length: 21 }, (_, n) => (
      <g key={n}>
        {n > 0 && <path d={`M${Math.round(n * CM)} 5v12`} stroke="#222" strokeWidth="2" />}
        <path d={`M${Math.round((n + 0.5) * CM)} 15v2`} stroke="#222" strokeWidth="2" />
        {n > 0 && <RulerText x={n * CM + 3} y="11">{n}</RulerText>}
      </g>
    ))}
  </svg>
);

const VerticalRuler = () => (
  <svg width="18" height="1106" aria-hidden="true">
    <path d="M1 1h16v1104H1z" fill="#fff" stroke="#8a8a8a" strokeWidth="2" />
    <path d="M2 2h15v14H2zM2 1090h15v14H2z" fill="#ababab" />
    {Array.from({ length: 29 }, (_, i) => {
      const y = Math.round(1107 - (i + 1) * CM);
      return (
        <g key={i}>
          <path d={`M4 ${y}h13`} stroke="#222" strokeWidth="2" />
          <path d={`M15 ${y + 19}h2`} stroke="#222" strokeWidth="2" />
          <RulerText transform={`translate(10 ${y - 3}) rotate(-90)`}>{i + 1}</RulerText>
        </g>
      );
    })}
  </svg>
);

const LayerTree = () => {
  const [visible, setVisible] = useState({ Export_Output_2_Merge1: true });
  return (
    <Tree>
      <TreeRow $indent={7}>
        <Expander aria-label="collapse" />
        <Icon name="stack" />
        <RootLabel>图层</RootLabel>
      </TreeRow>
      {layers.map((layer) => (
        <LayerGroup key={layer.name}>
          <TreeRow $indent={28}>
            <Expander aria-label="collapse" />
            <LayerCheck
              type="checkbox"
              id={layer.name}
              checked={!!visible[layer.name]}
              onChange={(e) => setVisible({ ...visible, [layer.name]: e.target.checked })}
            />
            <LayerName htmlFor={layer.name} $selected={layer.selected}>{layer.name}</LayerName>
          </TreeRow>
          {layer.field && <TreeRow $indent={92}>{layer.field}</TreeRow>}
          {layer.classes.map(([color, label]) => (
            <TreeRow key={color} $indent={57}>
              <Swatch $color={color} />
              {label}
            </TreeRow>
          ))}
        </LayerGroup>
      ))}
    </Tree>
  );
};

const App = () => (
  <>
    <GlobalStyle />
    <Window>
      <TitleBar>
        <TitleShade viewBox="0 0 520 46" aria-hidden="true">
          <defs>
            <filter id="soft" x="-20%" y="-50%" width="140%" height="200%">
              <feGaussianBlur stdDeviation="3" />
            </filter>
            <filter id="glow" x="-20%" y="-80%" width="140%" height="260%">
              <feGaussianBlur stdDeviation="9" />
            </filter>
          </defs>
          <path d="M213 15h58l20 32v9h-78zM380 15h58l21 32v9h-79z" fill="#b3d5f7" filter="url(#soft)" />
          <rect x="30" y="8" width="230" height="36" rx="14" fill="#b5c3da" opacity=".85" filter="url(#glow)" />
        </TitleShade>
        <WindowTitle>
          <Logo />
          无标题 - ArcMap
        </WindowTitle>
        <WindowButtons>
          <WindowButton $first aria-label="minimize">
            <svg width="20" height="28"><path d="M1 19h18v5H1z" fill="#fff" stroke="#4b5563" /></svg>
          </WindowButton>
          <WindowButton aria-label="restore">
            <svg width="22" height="22">
              <path d="M5 1h16v14H5z" fill="#eee" stroke="#4b5563" />
              <path d="M1 4h16v16H1zM6 9v6h6V9z" fill="#f4f4f4" stroke="#4b5563" fillRule="evenodd" />
            </svg>
          </WindowButton>
          <WindowButton $close aria-label="close">
            <svg width="20" height="20"><path d="M1 1h6l3 5 3-5h6l-6 9 6 9h-6l-3-5-3 5H1l6-9z" fill="#f4f4f4" stroke="#58606e" /></svg>
          </WindowButton>
        </WindowButtons>
      </TitleBar>

      <ToolbarArea>
        <ToolbarRow $height={38} $start={793}>
          <Toolbar>
            <Grip />
            <Tools items={layoutTools} />
            <ComboBox label="page zoom" value="44%" width={67} gap={12} />
            <Tools items={layoutToolsEnd} />
            <ToolbarEnd />
          </Toolbar>
        </ToolbarRow>
        <ToolbarRow $height={39} $start={4}>
          <Toolbar>
            <Grip />
            <Tools items={standardTools} />
            <ComboBox label="map scale" value="1:82,092," width={166} gap={10} />
            <Tools items={standardToolsEnd} />
            <ToolbarEnd />
          </Toolbar>
          <Toolbar>
            <Grip />
            <Tools items={mapTools} />
            <ToolbarEnd />
          </Toolbar>
        </ToolbarRow>
        <ToolbarRow $height={43} $start={1060}>
          <Toolbar>
            <Grip />
            <EditorButton>编辑器(R)</EditorButton>
            <Tools items={editorTools} />
            <ToolbarEnd />
          </Toolbar>
        </ToolbarRow>
        <MenuBar>
          {menus.map((title) => (
            <MenuSlot key={title}>
              <MenuTitle $open={title === "插入(I)"}>{title}</MenuTitle>
              {title === "插入(I)" && <InsertMenu />}
            </MenuSlot>
          ))}
        </MenuBar>
      </ToolbarArea>

      <Workspace>
        <ContentsPane>
          <PaneHeader $end="#cbd8e5">
            <PaneTitle>内容列表</PaneTitle>
          </PaneHeader>
          <PaneTools>
            <Tools items={["*byDrawing", "bySource", "byVisibility", "bySelection", "|", "options"]} />
          </PaneTools>
          <LayerTree />
        </ContentsPane>

        <MapView>
          <RulerTop><HorizontalRuler /></RulerTop>
          <RulerSide><VerticalRuler /></RulerSide>
          <Canvas>
            <Page>
              <Margins>
                <DataFrame>
                  <Countries viewBox="-585 -1029 2091 3060" aria-hidden="true">
                    {countries.map((c) => (
                      <path key={c.color} d={c.d} fill={c.color} stroke="#6e6e6e" strokeWidth="3" />
                    ))}
                  </Countries>
                  {handles.map(([x, y]) => (
                    <Handle key={`${x}-${y}`} $x={x} $y={y} />
                  ))}
                </DataFrame>
              </Margins>
            </Page>
          </Canvas>
          <ScrollV>
            <ScrollButton $width={36} $height={38} aria-label="scroll up"><Arrow dir="up" /></ScrollButton>
            <TrackV $share={226} />
            <ThumbV><GripLines vertical /></ThumbV>
            <TrackV $share={246} />
            <ScrollButton $width={36} $height={38} aria-label="scroll down"><Arrow dir="down" /></ScrollButton>
          </ScrollV>
          <ViewBar>
            <ViewButton aria-label="data view"><Icon name="dataView" size={12} /></ViewButton>
            <ViewButton $on aria-label="layout view"><Icon name="layoutView" size={12} /></ViewButton>
            <ViewDivider />
            <ViewButton aria-label="refresh"><Icon name="refresh" size={12} /></ViewButton>
            <ViewButton aria-label="pause drawing"><Pause /></ViewButton>
            <ScrollButton aria-label="scroll left"><Arrow dir="left" /></ScrollButton>
            <ThumbH><GripLines /></ThumbH>
            <ScrollButton aria-label="scroll right"><Arrow dir="right" /></ScrollButton>
          </ViewBar>
        </MapView>
      </Workspace>

      <ResultsPane>
        <PaneHeader $end="#d8e6f2">
          <PaneTitle>准备</PaneTitle>
          <PaneButton aria-label="pin"><Icon name="pin" size={13} /></PaneButton>
          <PaneButton aria-label="close"><Icon name="close" size={11} /></PaneButton>
        </PaneHeader>
        <FilterBar>
          <CountButtons>
            <CountButton><Icon name="error" size={18} />0 个错误</CountButton>
            <CountGap />
            <CountButton><Icon name="warning" size={18} />0 个警告</CountButton>
            <CountGap />
            <CountButton><Icon name="info" size={18} />0 条消息</CountButton>
          </CountButtons>
          <Search type="text" aria-label="搜索分析结果" placeholder="搜索分析结果" />
          <SearchButton aria-label="clear search"><Icon name="clearSearch" size={20} /></SearchButton>
        </FilterBar>
        <ResultsTable>
          <thead>
            <tr>
              {columns.map(([label, width], i) => (
                <ColumnHead key={i} $width={width}>
                  <ColumnLabel $first={i === 0}>{label}</ColumnLabel>
                </ColumnHead>
              ))}
            </tr>
          </thead>
          <tbody>
            <tr>
              <EmptyCell colSpan={columns.length}>此视图中没有项目可显示。</EmptyCell>
            </tr>
          </tbody>
        </ResultsTable>
        <ResultsFooter>
          <FooterCell>状态: 尚未分析</FooterCell>
          <FooterCell $width={322} $align="center">无项目</FooterCell>
          <FooterCell $width={769} $align="flex-end">
            <OnlyOpen>
              仅显示未解决的项目
              <OnlyOpenCheck type="checkbox" />
            </OnlyOpen>
          </FooterCell>
        </ResultsFooter>
      </ResultsPane>
      <StatusBar>
        <Coordinates>-18.06  26.24 厘米</Coordinates>
      </StatusBar>
    </Window>
  </>
);

export default App;
